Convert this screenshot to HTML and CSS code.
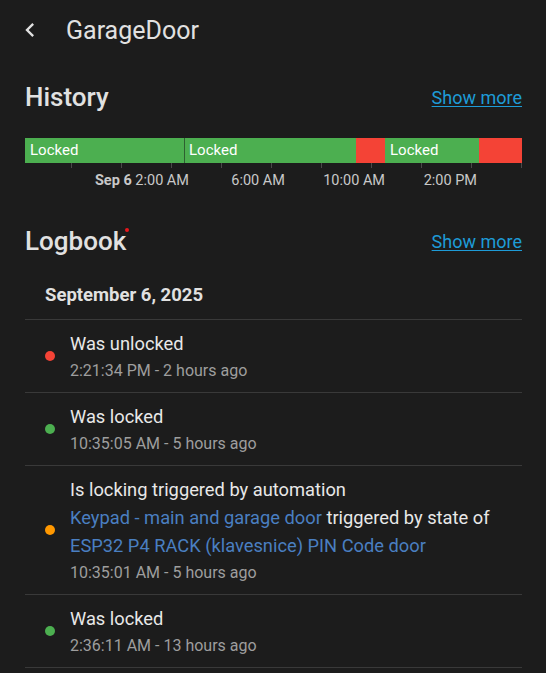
FILE: index.html
```html
<!DOCTYPE html>
<html>
<head>
<meta charset="utf-8">
<link rel="stylesheet" href="styles.css">
</head>
<body>
<div class="page">
  <header class="toolbar">
    <svg class="back" viewBox="0 0 24 24" width="28" height="28"><path d="M15.41,16.58L10.83,12L15.41,7.41L14,6L8,12L14,18L15.41,16.58Z" fill="#e1e1e1"/></svg>
    <div class="title">GarageDoor</div>
  </header>

  <section class="section history">
    <div class="sec-head">
      <h2>History</h2>
      <a class="more" href="#">Show more</a>
    </div>
    <div class="timeline">
      <div class="bar">
        <div class="seg on" style="width:159px">Locked</div>
        <div class="seg on divided" style="width:172px">Locked</div>
        <div class="seg off" style="width:29px"></div>
        <div class="seg on" style="width:94px">Locked</div>
        <div class="seg off" style="width:43px"></div>
      </div>
      <div class="axis">
        <span class="tick" style="left:46px"></span>
        <span class="tick" style="left:96px"></span>
        <span class="tick" style="left:146px"></span>
        <span class="tick" style="left:196px"></span>
        <span class="tick" style="left:246px"></span>
        <span class="tick" style="left:296px"></span>
        <span class="tick" style="left:346px"></span>
        <span class="tick" style="left:396px"></span>
        <span class="tick" style="left:446px"></span>
        <span class="tick" style="left:496px"></span>
        <span class="lbl" style="right:333px"><b>Sep 6</b> 2:00 AM</span>
        <span class="lbl" style="right:237px">6:00 AM</span>
        <span class="lbl" style="right:137px">10:00 AM</span>
        <span class="lbl" style="right:45px">2:00 PM</span>
      </div>
    </div>
  </section>

  <section class="section logbook">
    <div class="sec-head">
      <h2>Logbook<span class="notify"></span></h2>
      <a class="more" href="#">Show more</a>
    </div>
    <div class="date">September 6, 2025</div>
    <ul class="entries">
      <li class="entry">
        <svg class="dot" viewBox="0 0 10 10" width="10" height="10"><circle cx="5" cy="5" r="5" fill="#f44336"/></svg>
        <div class="body">
          <div class="msg">Was unlocked</div>
          <div class="time">2:21:34 PM - 2 hours ago</div>
        </div>
      </li>
      <li class="entry">
        <svg class="dot" viewBox="0 0 10 10" width="10" height="10"><circle cx="5" cy="5" r="5" fill="#4caf50"/></svg>
        <div class="body">
          <div class="msg">Was locked</div>
          <div class="time">10:35:05 AM - 5 hours ago</div>
        </div>
      </li>
      <li class="entry">
        <svg class="dot" viewBox="0 0 10 10" width="10" height="10"><circle cx="5" cy="5" r="5" fill="#ff9800"/></svg>
        <div class="body">
          <div class="msg">Is locking triggered by automation</div>
          <div class="msg"><a class="link" href="#">Keypad - main and garage door</a> triggered by state of <a class="link" href="#">ESP32 P4 RACK (klavesnice) PIN Code door</a></div>
          <div class="time">10:35:01 AM - 5 hours ago</div>
        </div>
      </li>
      <li class="entry">
        <svg class="dot" viewBox="0 0 10 10" width="10" height="10"><circle cx="5" cy="5" r="5" fill="#4caf50"/></svg>
        <div class="body">
          <div class="msg">Was locked</div>
          <div class="time">2:36:11 AM - 13 hours ago</div>
        </div>
      </li>
    </ul>
  </section>
</div>
</body>
</html>
```

FILE: styles.css
```css
html, body {
  margin: 0;
  padding: 0;
  background: #1c1c1c;
  color: #e1e1e1;
  font-family: Roboto, "Noto Sans", sans-serif;
}
.page {
  width: 546px;
  height: 673px;
  overflow: hidden;
}
.toolbar {
  display: flex;
  align-items: center;
  height: 60px;
  padding-left: 16px;
}
.back {
  display: block;
  margin-right: 22px;
}
.title {
  font-size: 25px;
  font-weight: 400;
  color: #e1e1e1;
}
.section {
  padding: 0 24px 0 25px;
}
.history { padding-top: 14px; }
.sec-head {
  display: flex;
  justify-content: space-between;
  align-items: center;
  height: 46px;
}
.sec-head h2 {
  margin: 0;
  font-size: 26px;
  font-weight: 500;
  color: #e1e1e1;
  position: relative;
}
.more {
  color: #1e9bd7;
  font-size: 18px;
  text-decoration: underline;
  text-underline-offset: 2px;
}
.timeline {
  margin-top: 18px;
}
.bar {
  display: flex;
  height: 25px;
}
.seg {
  height: 25px;
  box-sizing: border-box;
  font-size: 15px;
  line-height: 24px;
  padding-left: 5px;
  color: #ffffff;
  overflow: hidden;
  white-space: nowrap;
}
.seg.on { background: #4caf50; }
.seg.off { background: #f44336; }
.seg.divided { border-left: 1px solid #2e5f31; padding-left: 4px; }
.axis {
  position: relative;
  height: 32px;
}
.tick {
  position: absolute;
  top: 0;
  width: 1px;
  height: 5px;
  background: #4a4a4a;
}
.lbl {
  position: absolute;
  top: 9px;
  font-size: 14.5px;
  color: #c8c8c8;
  white-space: nowrap;
}
.lbl b { font-weight: 700; }

.logbook { margin-top: 23px; }
.notify {
  position: absolute;
  right: -3px;
  top: 2px;
  width: 4px;
  height: 4px;
  border-radius: 50%;
  background: #e8171c;
}
.date {
  font-size: 18.5px;
  font-weight: 700;
  color: #e1e1e1;
  padding: 20px 0 13px 20px;
  line-height: 22px;
  border-bottom: 1px solid #393939;
}
.entries {
  list-style: none;
  margin: 0;
  padding: 0;
}
.entry {
  display: flex;
  align-items: center;
  padding: 10px 0 11px 20px;
  border-bottom: 1px solid #393939;
}
.dot {
  display: block;
  flex: none;
  margin-right: 15px;
}
.msg {
  font-size: 18.3px;
  line-height: 28px;
  color: #e8e8e8;
}
.link {
  color: #4a7fc1;
  text-decoration: none;
}
.time {
  font-size: 16px;
  line-height: 20px;
  margin-top: 3px;
  color: #9e9e9e;
}
```
